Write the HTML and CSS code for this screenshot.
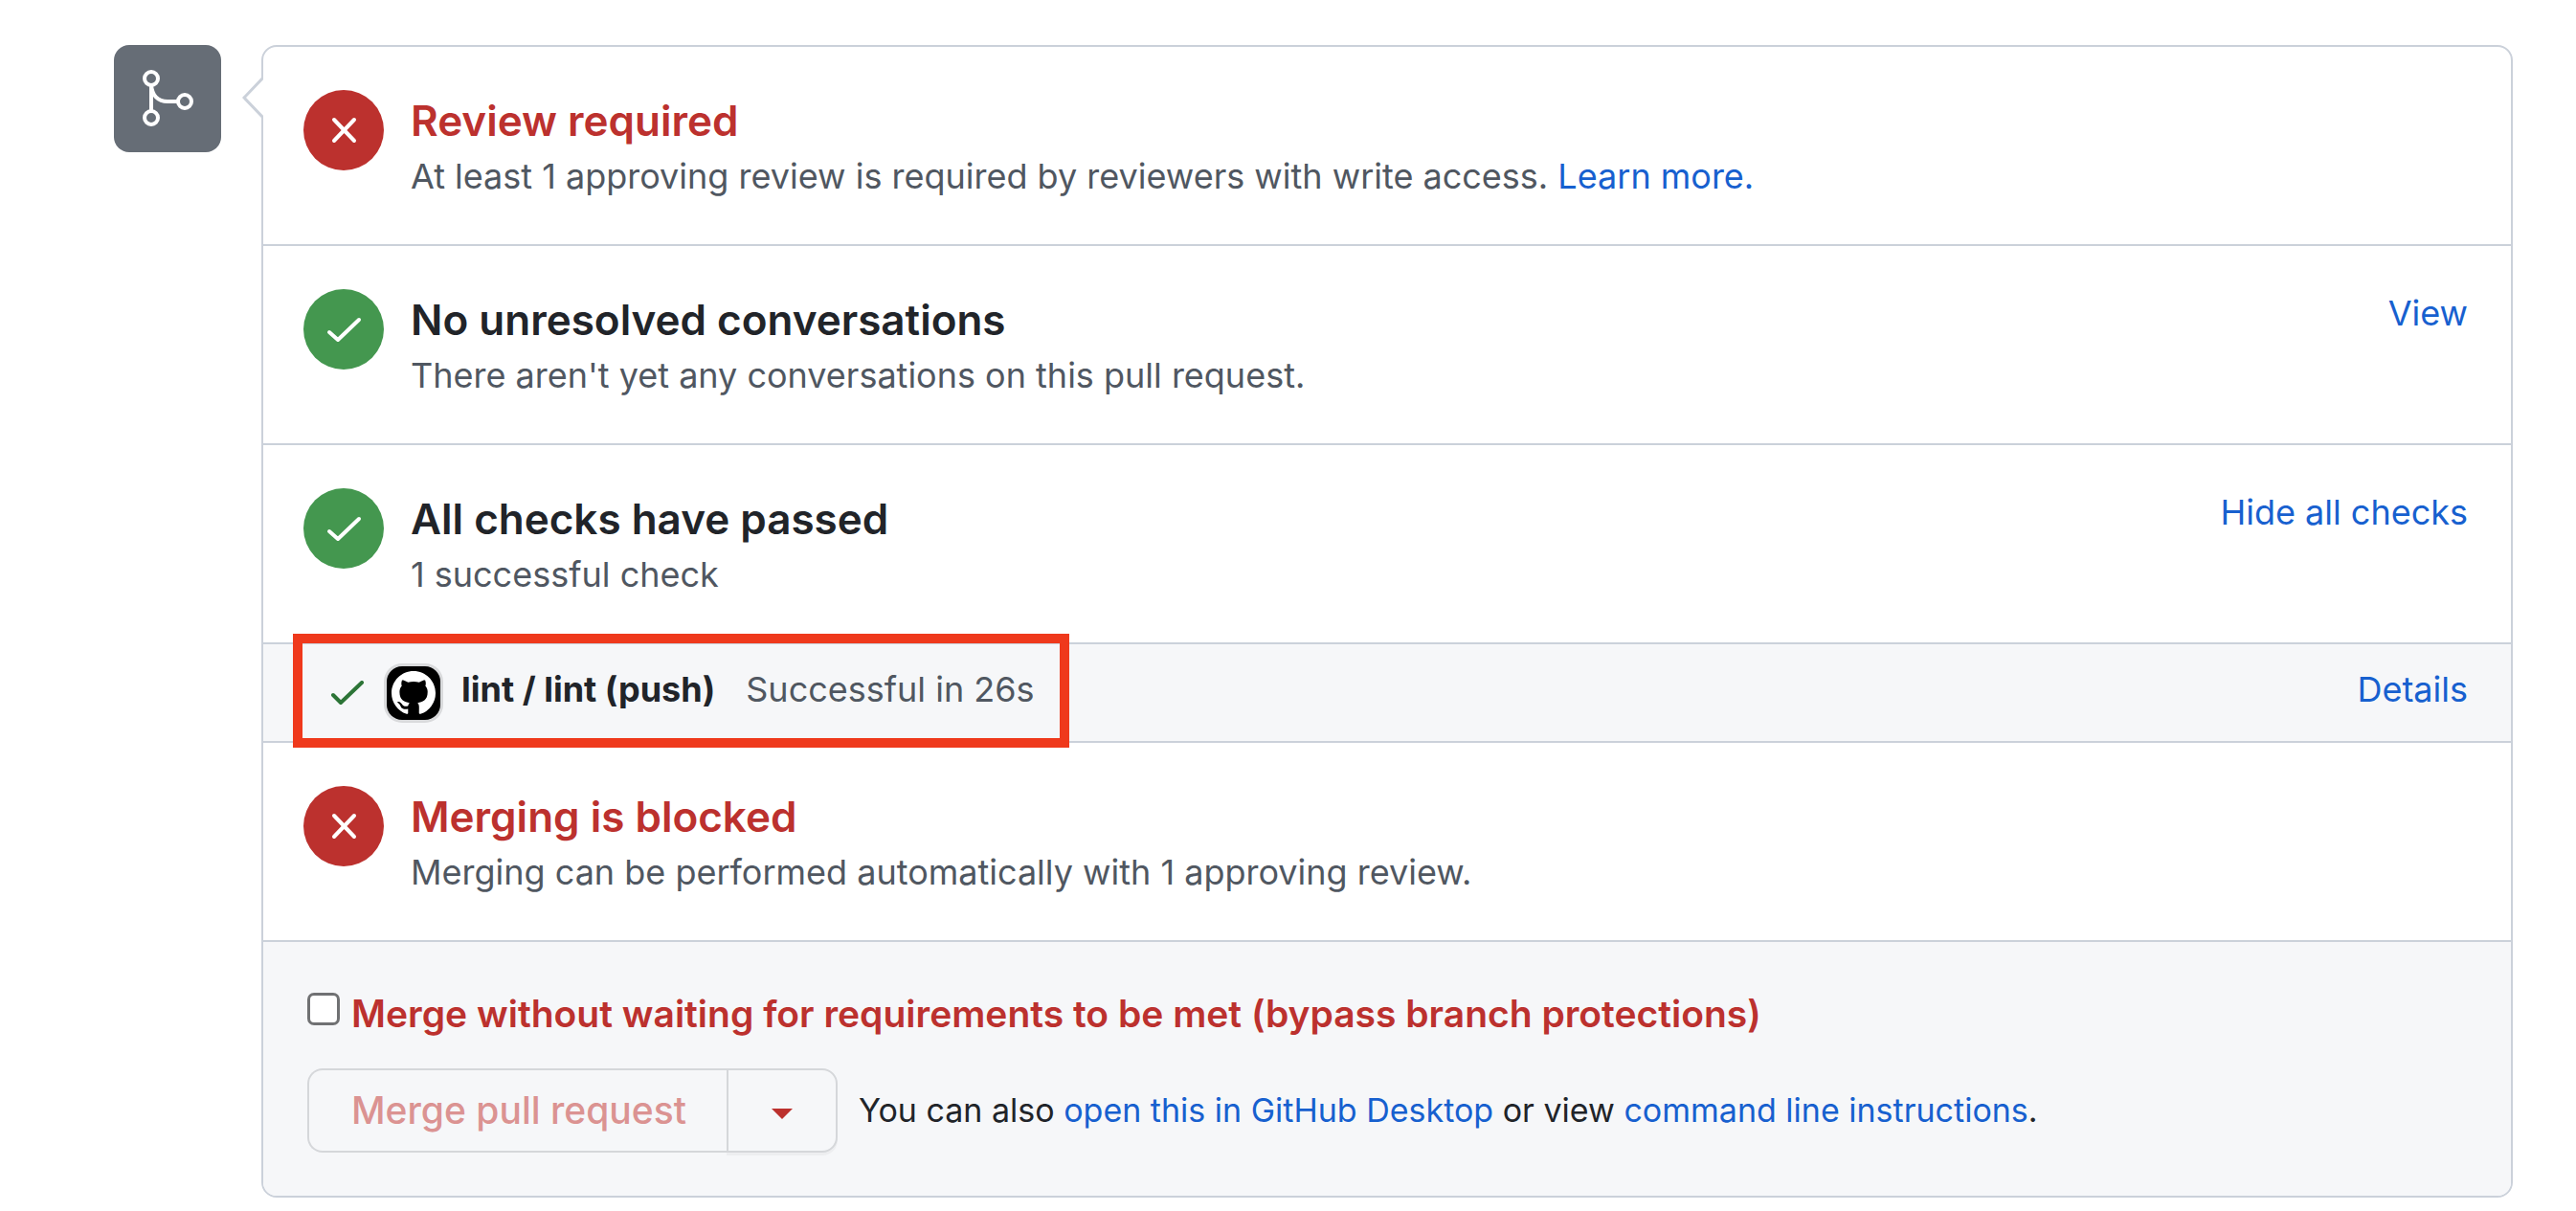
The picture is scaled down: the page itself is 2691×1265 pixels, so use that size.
FILE: index.html
```html
<!DOCTYPE html>
<html lang="en">
<head>
<meta charset="utf-8">
<title>Merge status</title>
<link rel="stylesheet" href="styles.css">
</head>
<body>
<main class="merge">
  <div class="badge">
    <svg viewBox="0 0 112 112" fill="none" stroke="currentColor" stroke-width="4" aria-hidden="true">
      <circle cx="39" cy="35" r="7"/><circle cx="39" cy="76" r="7"/><circle cx="74" cy="59" r="7"/>
      <path d="M39 42v27M39 42c1 11 7 17 17 17h11"/>
    </svg>
  </div>
  <div class="panel">
    <svg class="pointer" viewBox="0 0 22 44" aria-hidden="true"><path d="M22 1 2 22l20 21" fill="#fff" stroke="#cbd1da" stroke-width="3"/></svg>

    <section class="item">
      <span class="status status-bad"><svg viewBox="0 0 84 84" aria-hidden="true"><path d="m32 31 21 22M53 31 32 53"/></svg></span>
      <div class="copy">
        <h2 class="title title-bad">Review required</h2>
        <p class="note">At least 1 approving review is required by reviewers with write access. <a href="#">Learn more.</a></p>
      </div>
    </section>

    <section class="item">
      <span class="status status-good"><svg viewBox="0 0 84 84" aria-hidden="true"><path d="m27 45 9 8 22-21"/></svg></span>
      <div class="copy">
        <h2 class="title">No unresolved conversations</h2>
        <p class="note">There aren't yet any conversations on this pull request.</p>
      </div>
      <a class="action" href="#">View</a>
    </section>

    <section class="item">
      <span class="status status-good"><svg viewBox="0 0 84 84" aria-hidden="true"><path d="m27 45 9 8 22-21"/></svg></span>
      <div class="copy">
        <h2 class="title">All checks have passed</h2>
        <p class="note">1 successful check</p>
      </div>
      <a class="action" href="#">Hide all checks</a>
    </section>

    <section class="check">
      <div class="check-main">
        <svg class="tick" viewBox="0 0 34 26" aria-hidden="true"><path d="m2 15 8 8L32 2"/></svg>
        <span class="avatar"><svg viewBox="0 0 16 16" aria-hidden="true"><path fill="#fff" d="M8 0C3.58 0 0 3.58 0 8c0 3.54 2.29 6.53 5.47 7.59.4.07.55-.17.55-.38 0-.19-.01-.82-.01-1.49-2.01.37-2.53-.49-2.69-.94-.09-.23-.48-.94-.82-1.13-.28-.15-.68-.52-.01-.53.63-.01 1.08.58 1.23.82.72 1.21 1.87.87 2.33.66.07-.52.28-.87.51-1.07-1.78-.2-3.64-.89-3.64-3.95 0-.87.31-1.59.82-2.15-.08-.2-.36-1.02.08-2.12 0 0 .67-.21 2.2.82.64-.18 1.32-.27 2-.27.68 0 1.36.09 2 .27 1.53-1.04 2.2-.82 2.2-.82.44 1.1.16 1.92.08 2.12.51.56.82 1.27.82 2.15 0 3.07-1.87 3.75-3.65 3.95.29.25.54.73.54 1.48 0 1.07-.01 1.93-.01 2.2 0 .21.15.46.55.38A8.013 8.013 0 0016 8c0-4.42-3.58-8-8-8z"/></svg></span>
        <strong class="check-name">lint / lint (push)</strong>
        <span class="check-result">Successful in 26s</span>
      </div>
      <a class="check-link" href="#">Details</a>
    </section>

    <section class="item">
      <span class="status status-bad"><svg viewBox="0 0 84 84" aria-hidden="true"><path d="m32 31 21 22M53 31 32 53"/></svg></span>
      <div class="copy">
        <h2 class="title title-bad">Merging is blocked</h2>
        <p class="note">Merging can be performed automatically with 1 approving review.</p>
      </div>
    </section>

    <section class="footer">
      <div class="bypass">
        <input class="box" type="checkbox" id="bypass">
        <label for="bypass">Merge without waiting for requirements to be met (bypass branch protections)</label>
      </div>
      <div class="controls">
        <div class="buttons">
          <button class="btn btn-merge" type="button" disabled>Merge pull request</button>
          <button class="btn btn-more" type="button" aria-label="Select merge method"><svg viewBox="0 0 22 11" aria-hidden="true"><path d="M0 0h22L11 11z" fill="currentColor"/></svg></button>
        </div>
        <p class="hint">You can also <a href="#">open this in GitHub Desktop</a> or view <a href="#">command line instructions</a>.</p>
      </div>
    </section>
  </div>
</main>
</body>
</html>
```
FILE: styles.css
```css
* { box-sizing: border-box; }

body {
  margin: 0;
  background: #fff;
  color: #212429;
  font-family: Inter, "Liberation Sans", sans-serif;
  font-size: 36px;
  line-height: 52px;
}

h2, p { margin: 0; }
a { color: #1760cf; text-decoration: none; }
svg { display: block; }

.merge {
  display: flex;
  align-items: flex-start;
  gap: 42px;
  padding: 47px 66px 14px 119px;
}

.badge {
  flex: none;
  width: 112px;
  height: 112px;
  border-radius: 16px;
  background: #666d76;
  color: #fff;
}

.panel {
  position: relative;
  flex: 1;
  min-width: 0;
  border: 2px solid #cbd1da;
  border-radius: 16px;
}

.pointer {
  position: absolute;
  top: 31px;
  left: -22px;
  width: 22px;
  height: 44px;
}

.item {
  display: flex;
  align-items: flex-start;
  padding: 45px 45px 45px 42px;
  border-bottom: 2px solid #cbd1da;
}

.status {
  flex: none;
  width: 84px;
  height: 84px;
  margin-right: 28px;
  border-radius: 50%;
}

.status path, .tick path {
  fill: none;
  stroke: #fff;
  stroke-width: 4;
  stroke-linecap: round;
  stroke-linejoin: round;
}

.status-bad { background: #bc312e; }
.status-good { background: #44974f; }

.copy { flex: 1; min-width: 0; }

.title {
  font-size: 44px;
  font-weight: 600;
  line-height: 64px;
}

.title-bad { color: #bc312e; }
.note { color: #505761; }

.action { line-height: 50px; }

.check {
  display: flex;
  justify-content: space-between;
  align-items: center;
  padding: 0 45px 0 71px;
  border-bottom: 2px solid #cbd1da;
  background: #f6f7f9;
}

.check-main {
  position: relative;
  display: flex;
  align-items: center;
  height: 101px;
}

/* Highlight frame drawn over the row and its dividers. */
.check-main::after {
  content: "";
  position: absolute;
  inset: -11px -36px -7px -40px;
  border: 10px solid #ef391c;
  pointer-events: none;
}

.tick {
  width: 34px;
  height: 26px;
  margin-right: 24px;
}

.tick path { stroke: #2c7437; }

.avatar {
  width: 56px;
  height: 56px;
  margin-right: 22px;
  padding: 5px;
  border-radius: 16px;
  background: #000;
  box-shadow: 0 0 0 3px #d9dadc;
}

.check-name {
  margin: 0 32px 8px 0;
  font-weight: 700;
}

.check-result {
  margin-bottom: 8px;
  color: #505761;
}

.check-link { margin-bottom: 8px; }

.footer {
  padding: 47px 45px 45px 46px;
  border-radius: 0 0 14px 14px;
  background: #f6f7f9;
}

.bypass {
  display: flex;
  align-items: flex-start;
  gap: 12px;
  margin-bottom: 29px;
  color: #bc312e;
  font-size: 39px;
  font-weight: 600;
  line-height: 56px;
}

.box {
  appearance: none;
  flex: none;
  width: 34px;
  height: 34px;
  margin: 6px 0 0;
  border: 3px solid #707173;
  border-radius: 7px;
  background: #fff;
}

.controls {
  display: flex;
  align-items: center;
  gap: 22px;
}

.buttons { display: flex; }

.btn {
  height: 88px;
  border: 2px solid #d5d7da;
  background: #f6f7f9;
  color: #bc312e;
  font: 500 39px/56px Inter, "Liberation Sans", sans-serif;
}

.btn-merge {
  padding: 0 42px 0 44px;
  border-right: 0;
  border-radius: 16px 0 0 16px;
  color: #db9392;
}

.btn-more {
  padding: 6px 45px 0;
  border-radius: 0 16px 16px 0;
  box-shadow: 0 3px 0 #edeef0;
}

.btn-more svg { width: 22px; height: 11px; }

.hint { font-size: 34px; }
```
